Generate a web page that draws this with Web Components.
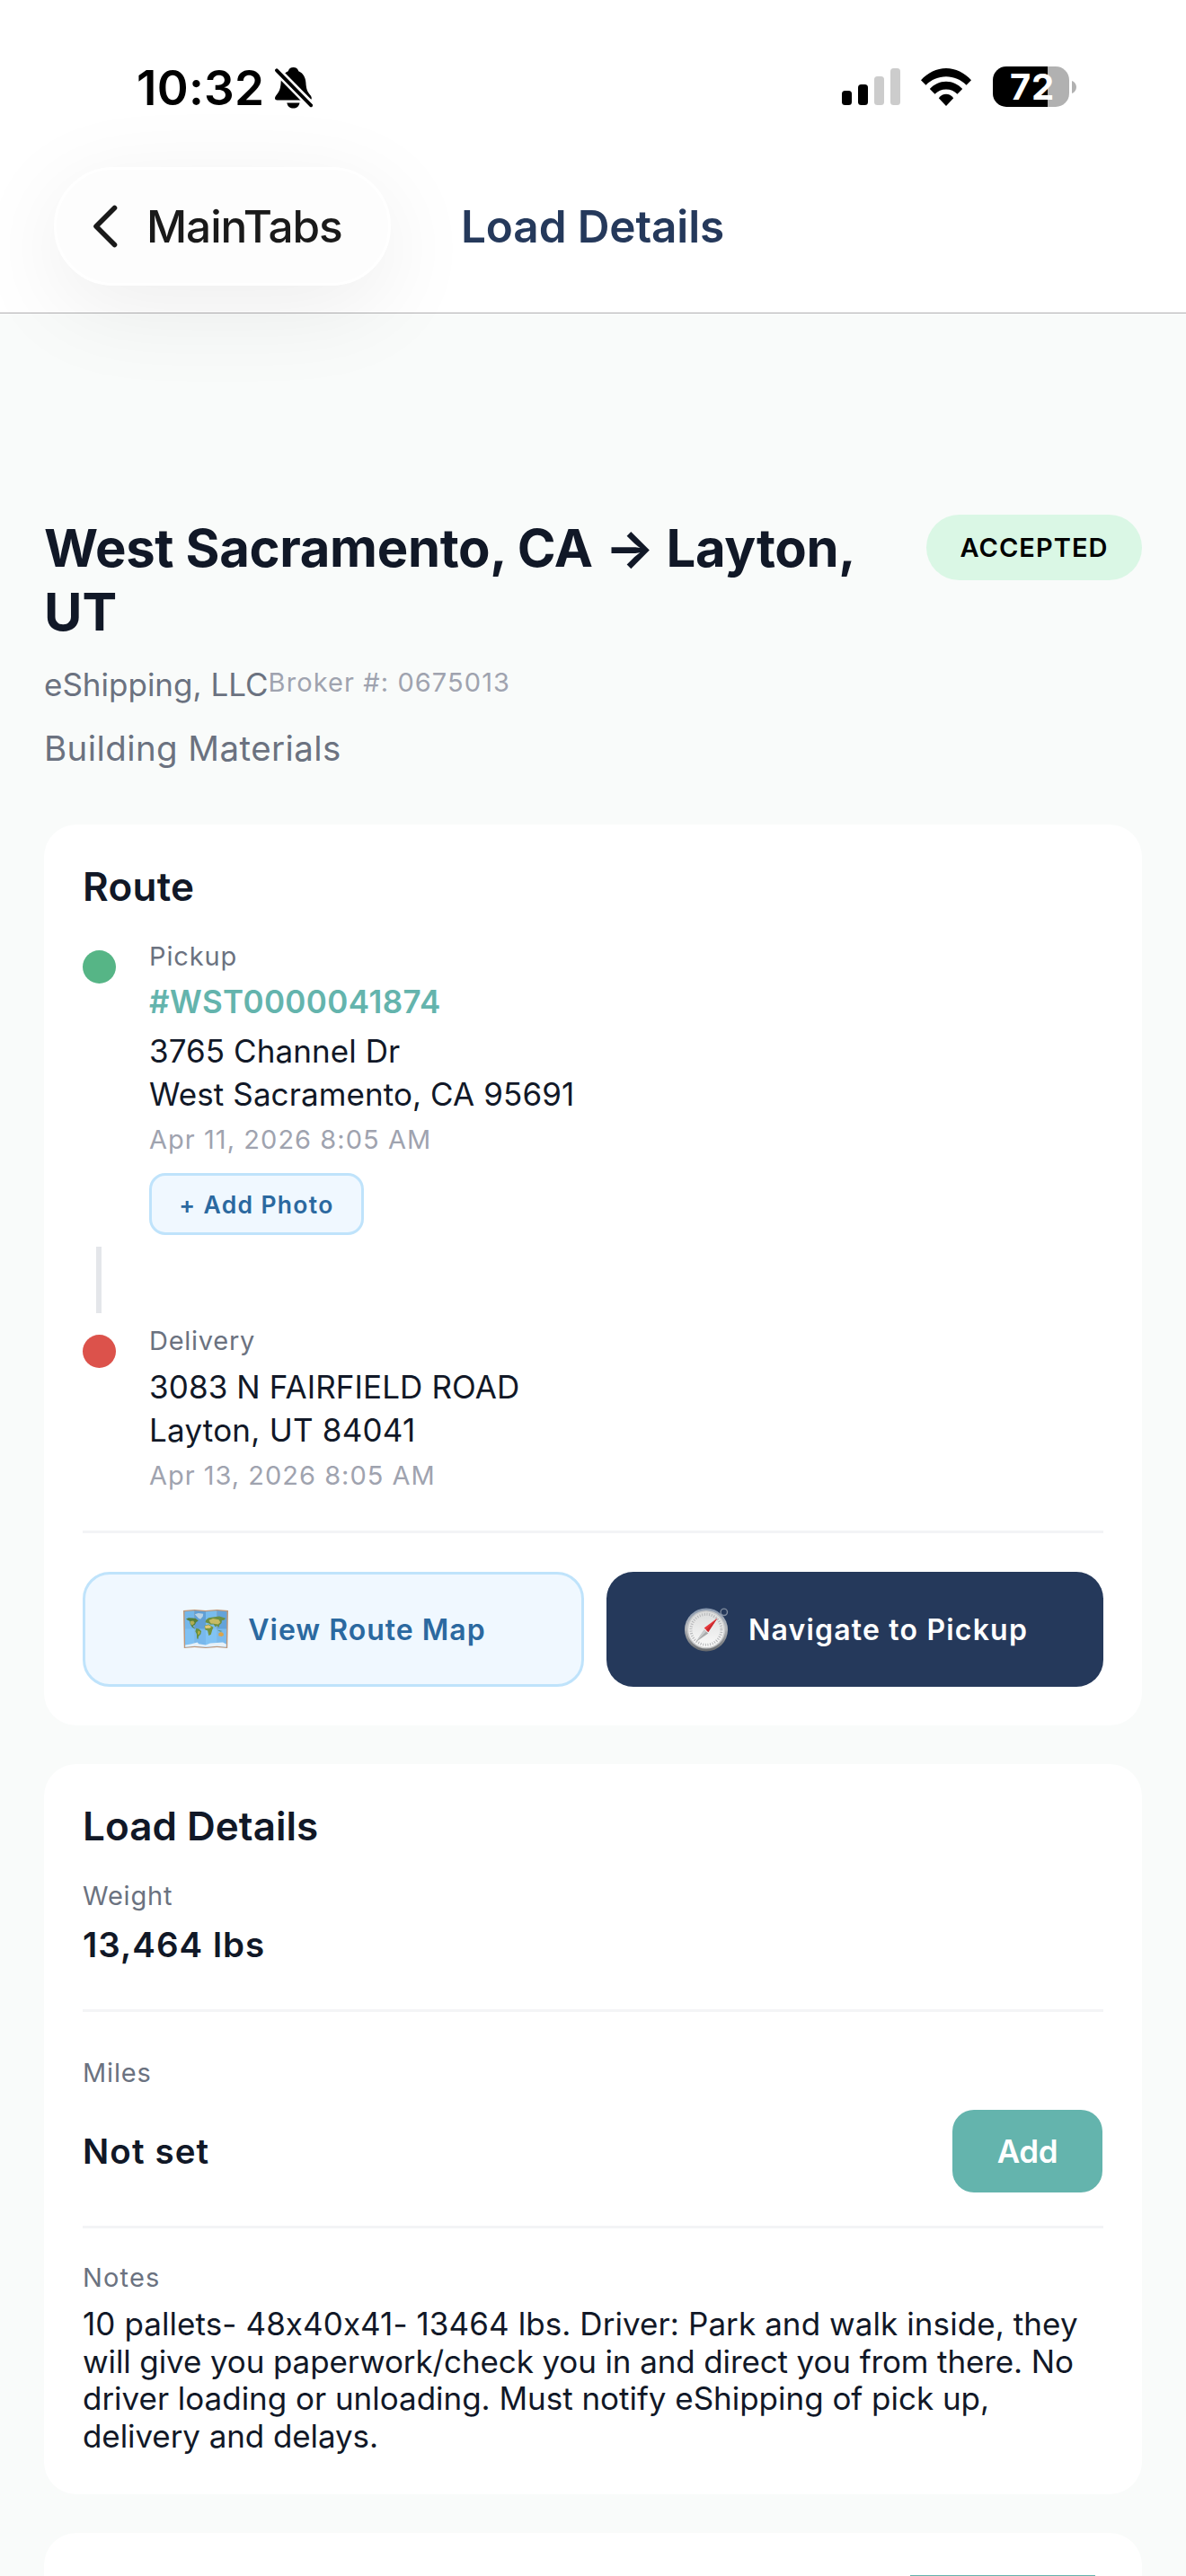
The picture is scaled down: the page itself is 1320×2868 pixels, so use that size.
<!DOCTYPE html>
<html lang="en">
<head>
<meta charset="utf-8">
<title>Load Details</title>
<style>
  html {
    background: #f9fbfa;
  }
  body {
    margin: 0;
    width: 1320px;
    height: 2868px;
    overflow: hidden;
    font-family: Inter, "Liberation Sans", sans-serif;
    color: #111827;
  }
</style>
</head>
<body>
<load-screen></load-screen>

<script>
const define = (name, html, Base = HTMLElement) => {
  const template = document.createElement('template')
  template.innerHTML = html
  customElements.define(name, class extends Base {
    constructor () {
      super()
      this.attachShadow({mode: 'open'})
      this.shadowRoot.appendChild(template.content.cloneNode(true))
    }
  })
}

// Text that is tracked out (or in) until its ink is `width` pixels wide
class TrackedText extends HTMLElement {
  connectedCallback () {
    const width = Number(this.getAttribute('width'))
    const text = this.textContent.trim()
    const style = getComputedStyle(this)
    const ctx = document.createElement('canvas').getContext('2d')
    ctx.font = `${style.fontWeight} ${style.fontSize} ${style.fontFamily}`
    const box = ctx.measureText(text)
    const ink = box.actualBoundingBoxRight + box.actualBoundingBoxLeft
    const spacing = (width - ink) / (text.length - 1)
    this.style.letterSpacing = `${spacing.toFixed(3)}px`
  }
}

define('tracked-text', /* HTML */`
<style>
    :host {
        display: inline;
        white-space: nowrap;
    }
</style>
<slot></slot>
`, TrackedText)

define('status-bar', /* HTML */`
<style>
    :host {
        display: flex;
        justify-content: space-between;
        box-sizing: border-box;
        height: 186px;
        padding: 74px 122px 0 152px;
        color: #000;
    }
    .side {
        display: flex;
        align-items: center;
        height: 45px;
    }
    .time {
        font-size: 53px;
        font-weight: 600;
        line-height: 45px;
        margin-top: 3px;
        width: 154px;
    }
    .bell { margin-top: 3px; }
    .wifi { margin: 0 23px 0 22px; }
    .battery {
        box-sizing: border-box;
        width: 85px;
        height: 45px;
        padding-left: 3px;
        border-radius: 15px;
        background: linear-gradient(90deg, #000 61px, #b1b1b1 61px);
        color: #fff;
        font-size: 40px;
        font-weight: 700;
        line-height: 45px;
        text-align: center;
    }
    .nub { margin-left: 3px; }
    svg { display: block; }
</style>
<div class="side">
    <div class="time"><tracked-text width="137">10:32</tracked-text></div>
    <svg class="bell" width="42" height="46" viewBox="0 0 42 46">
        <path d="M20.5 0c3 0 5 1.6 5.8 4.2C31.5 6.3 34 11 34.4 17c.4 7 1.6 10 5 14 2 2.3 2 5.5-1 5.5H2.5c-3 0-3.2-3-1.2-5.3C4.8 27 6.2 24 6.6 17 7 11 9.5 6.3 14.7 4.2 15.5 1.6 17.5 0 20.5 0Z"/>
        <path d="M13.3 39.4h14.2c-.6 3.8-3.5 6.2-7.1 6.2s-6.5-2.4-7.1-6.2Z"/>
        <path d="M-1 .2 43 45" stroke="#fff" stroke-width="9"/>
        <path d="M2 3.3 40.2 42.3" stroke="#000" stroke-width="3.8" stroke-linecap="round"/>
    </svg>
</div>
<div class="side">
    <svg width="65" height="41" viewBox="0 0 65 41">
        <rect y="25" width="11" height="16" rx="3.5"/>
        <rect x="18" y="18" width="11" height="23" rx="3.5"/>
        <rect x="36" y="9" width="11" height="32" rx="3.5" fill="#ccc"/>
        <rect x="54" width="11" height="41" rx="3.5" fill="#ccc"/>
    </svg>
    <svg class="wifi" width="58" height="42" viewBox="0 0 57 42">
        <path d="M.5 13.3C8 5 18 0 28.5 0S49 5 56.5 13.3L51 18.8C45 12.8 37 9.3 28.5 9.3S12 12.8 6 18.8Z"/>
        <path d="M10.3 23C15 18 21.5 14.8 28.5 14.8S42 18 46.7 23L41 28.7C37.5 25.4 33.3 23.5 28.5 23.5S19.5 25.4 16 28.7Z"/>
        <path d="M20.3 33.2C22.6 30.3 25.4 28.8 28.5 28.8S34.4 30.3 36.7 33.2L28.5 42Z"/>
    </svg>
    <div class="battery"><tracked-text width="46">72</tracked-text></div>
    <svg class="nub" width="5" height="14" viewBox="0 0 5 14">
        <path d="M0 0c3 1 5 3.8 5 7s-2 6-5 7Z" fill="#b1b1b1"/>
    </svg>
</div>
`)

define('nav-header', /* HTML */`
<style>
    :host {
        display: block;
        position: relative;
        z-index: 1;
        height: 348px;
        background: #fff;
        border-bottom: 1px solid #b1b0b2;
    }
    .row {
        display: flex;
        align-items: center;
        gap: 78px;
        padding-left: 60px;
    }
    .back {
        display: flex;
        align-items: center;
        box-sizing: border-box;
        width: 375px;
        height: 132px;
        padding-left: 40px;
        gap: 32px;
        border: 3px solid #fff;
        border-radius: 66px;
        background: #fdfdfd;
        box-shadow: 0 24px 105px rgba(0, 0, 0, 0.075);
        color: #1a1a1a;
        font-size: 49.5px;
        font-weight: 500;
    }
    .title {
        color: #25395b;
        font-size: 49.5px;
        font-weight: 600;
    }
</style>
<status-bar></status-bar>
<div class="row">
    <div class="back">
        <svg width="28" height="48" viewBox="0 0 28 48" fill="none" stroke="#1a1a1a" stroke-width="5.6" stroke-linecap="round" stroke-linejoin="round">
            <path d="M24.5 3.5 4 24l20.5 20.5"/>
        </svg>
        <tracked-text width="214">MainTabs</tracked-text>
    </div>
    <div class="title"><tracked-text width="289">Load Details</tracked-text></div>
</div>
`)

define('status-badge', /* HTML */`
<style>
    :host {
        flex: none;
        width: 240px;
        height: 73px;
        border-radius: 37px;
        background: #daf7e5;
        color: #000;
        font-size: 29px;
        font-weight: 600;
        line-height: 73px;
        text-align: center;
    }
</style>
<slot></slot>
`)

define('load-summary', /* HTML */`
<style>
    :host {
        display: block;
        height: 345px;
        padding-top: 224px;
    }
    .top {
        display: flex;
        justify-content: space-between;
    }
    h1 {
        flex: 1;
        margin: 1.5px 0 0;
        font-size: 58px;
        font-weight: 700;
        line-height: 71px;
    }
    .company {
        display: flex;
        align-items: flex-start;
        margin-top: 24.5px;
        color: #6b7280;
        font-size: 35px;
        line-height: 43px;
    }
    .broker {
        color: #9fa3af;
        font-size: 29px;
        line-height: 37px;
    }
    .commodity {
        margin-top: 25px;
        color: #6b7280;
        font-size: 38.5px;
        line-height: 48px;
    }
</style>
<div class="top">
    <h1><tracked-text width="900">West Sacramento, CA → Layton,</tracked-text> UT</h1>
    <status-badge><tracked-text width="163">ACCEPTED</tracked-text></status-badge>
</div>
<div class="company">
    <tracked-text width="247">eShipping, LLC</tracked-text>
    <div class="broker"><tracked-text width="265.5">Broker #: 0675013</tracked-text></div>
</div>
<div class="commodity"><tracked-text width="326">Building Materials</tracked-text></div>
`)

define('info-card', /* HTML */`
<style>
    :host {
        display: block;
        margin-bottom: 43px;
        padding: 43px;
        border-radius: 36px;
        background: #fff;
    }
    ::slotted([slot="title"]) {
        display: block;
        font-size: 44px;
        font-weight: 600;
        line-height: 52px;
    }
</style>
<slot name="title"></slot>
<slot></slot>
`)

define('route-stop', /* HTML */`
<style>
    :host {
        display: flex;
        gap: 37px;
        color: #111827;
        font-size: 35px;
        line-height: 48px;
    }
    .dot {
        flex: none;
        width: 37px;
        height: 37px;
        margin-top: 12px;
        border-radius: 50%;
        background: var(--dot);
    }
    .body {
        display: flex;
        flex-direction: column;
        align-items: flex-start;
    }
    ::slotted([slot="label"]) {
        color: #6b7280;
        font-size: 29px;
        line-height: 37px;
    }
    ::slotted([slot="reference"]) {
        margin-top: 11px;
        color: #64b4ad;
        font-weight: 600;
        line-height: 43px;
    }
    .address {
        display: flex;
        flex-direction: column;
        margin-top: 8.5px;
    }
    ::slotted([slot="date"]) {
        margin-top: 8.5px;
        color: #9fa3af;
        font-size: 29px;
        line-height: 37px;
    }
</style>
<div class="dot"></div>
<div class="body">
    <slot name="label"></slot>
    <slot name="reference"></slot>
    <div class="address"><slot></slot></div>
    <slot name="date"></slot>
    <slot name="action"></slot>
</div>
`)

define('soft-button', /* HTML */`
<style>
    :host {
        display: flex;
        align-items: center;
        justify-content: center;
        box-sizing: border-box;
        border: 3px solid #bfe3fb;
        border-radius: 30px;
        background: #f0f8ff;
        color: #2b69a0;
        font-weight: 600;
    }
    :host([kind="navy"]) {
        border: 0;
        background: #25395b;
        color: #fff;
    }
    :host([kind="teal"]) {
        border: 0;
        border-radius: 24px;
        background: #64b4ad;
        color: #fff;
    }
    :host([small]) {
        border-radius: 18px;
    }
</style>
<slot></slot>
`)

define('map-icon', /* HTML */`
<style>
    :host { display: block; }
    svg { display: block; }
</style>
<svg width="50" height="44" viewBox="0 0 50 44">
    <path d="M0 1 12.5 0 25 1 37.5 0 50 1l-.8 42L37.5 42 25 43l-12.5-1L.8 43Z" fill="#bd9678"/>
    <path d="M1.5 2.3 12.5 1.3v39.5L2.2 41.7Z" fill="#73b7ea"/>
    <path d="M12.5 1.3 25 2.3v39.4l-12.5-.9Z" fill="#609fd6"/>
    <path d="M25 2.3 37.5 1.3v39.5L25 41.7Z" fill="#78bcee"/>
    <path d="m37.5 1.3 11 1-.7 39.4-10.3-.9Z" fill="#63a3da"/>
    <path d="M2 21.5h46.2l-.4 19.8-10.3-.8-12.5 1-12.5-1-10.3.8Z" fill="#85c6f8" opacity=".65"/>
    <path d="M2.2 41.7v-2.2l6-1 7.5-2 1.5 1.7 7.8 1.2 5-2 14-.8 3.8 1.8v3.3l-10.3-.9-12.5.9-12.5-.9Z" fill="#e6f1f9"/>
    <path d="m12.800 5.200 4-1.200 5.400.8-.5 3-2.600 2.900-2.400-1.200Z" fill="#b9d2e4"/>
    <path d="m3 10.5 2.800-1.300 5 .2 3 .6 3 2.500-2.400 1.500-1.600 3-2.200 1.200 2.600 3.300-3.300-1.800-2-3.300-.8-3.700-1.800-.7Z" fill="#557f3a"/>
    <path d="m7.600 13 3.600-.4 1.500 2.500-2.500 2.500-2-1Z" fill="#b2ad53"/>
    <path d="m14.300 21 3 .4 2.800 2.600-.8 3.600-2.200 2.200-.7 3.200-1.200-.8-.3-5-1.500-3Z" fill="#668f3c"/>
    <path d="m16.500 23.600 2.300 1.200-1.400 3.500-1.200-1Z" fill="#bdb24e"/>
    <path d="m24.500 14.300.8-2.700 2.800-2.300 5-.8 7-1 7 2.200-1.800 2-2.400.3-.3 3-2.400 2.200-.8 2.800-2-2.300-1.500 1.800-2.200-3-3.300.3-1.800-1.300Z" fill="#6c8f43"/>
    <path d="m28.500 12 4.500-2 6.500 1.200 1.800 3-2.600 2.300-5-.8-3-.3Z" fill="#c7bb63"/>
    <path d="m23.600 18 4.600-1.600 3.800 2.300 1.500 1.400-1.300 2.600-1.400 5-2.500 1.200-1.200-5.300-2.700-1.200Z" fill="#73923e"/>
    <path d="m24 18.300 4-1 3.300 1.800-1.700 1.700-5 .2Z" fill="#e0c778"/>
    <path d="m39.300 26.400 2.500-1.500 2.500 1.200.7 2.600-2.300 1.300-3.400-.8Z" fill="#dba348"/>
    <path d="m37.400 22.400 3.200 1 3 .6-2.600.5Z" fill="#55803b"/>
</svg>
`)

define('compass-icon', /* HTML */`
<style>
    :host { display: block; }
    svg { display: block; }
</style>
<svg width="49" height="49" viewBox="0 0 49 49">
    <defs>
        <linearGradient id="rim" x1="0" y1="0" x2="0" y2="1">
            <stop offset="0" stop-color="#8797ae"/>
            <stop offset=".45" stop-color="#b7b9bc"/>
            <stop offset="1" stop-color="#66696d"/>
        </linearGradient>
        <linearGradient id="face" x1="0" y1="0" x2="0" y2="1">
            <stop offset="0" stop-color="#dcdddd"/>
            <stop offset="1" stop-color="#fafafa"/>
        </linearGradient>
    </defs>
    <circle cx="43.800" cy="4.800" r="3.700" fill="none" stroke="#7f8b9e" stroke-width="1.400"/>
    <circle cx="24" cy="24.500" r="24" fill="url(#rim)"/>
    <circle cx="24" cy="24.300" r="21.300" fill="#c8c9ca"/>
    <circle cx="24" cy="24.300" r="19.800" fill="url(#face)"/>
    <circle cx="24" cy="24.300" r="17" fill="none" stroke="#b4b5b7" stroke-width="3" stroke-dasharray="1 1.670"/>
    <path d="m12.500 38 9.200-13.500 4.600 4Z" fill="#a7a9aa"/>
    <path d="m12.500 38 9.200-13.500 2.300 2Z" fill="#c9cbcc"/>
    <path d="m36.500 11.500-14.800 11 4.600 4.500Z" fill="#e5383b"/>
    <path d="m36.500 11.500-12.500 13.300 2.300 2.200Z" fill="#c7272d"/>
</svg>
`)

define('route-card', /* HTML */`
<style>
    :host { display: block; }
    route-stop { margin-top: 33px; }
    .pickup { --dot: #56b586; }
    .delivery { --dot: #dc524b; margin-top: 12px; }
    .line {
        width: 6px;
        height: 74px;
        margin: 13px 0 0 15px;
        background: #e4e6ea;
    }
    .photo {
        width: 239px;
        height: 69px;
        margin-top: 19px;
        font-size: 26.5px;
    }
    .actions {
        display: grid;
        grid-template-columns: 558px 553px;
        gap: 25px;
        margin-top: 43px;
        padding-top: 43px;
        border-top: 3px solid #f3f4f6;
        font-size: 32px;
    }
    .actions soft-button {
        height: 128px;
        gap: 22px;
        padding-left: 3px;
    }
</style>
<info-card>
    <tracked-text slot="title" width="120">Route</tracked-text>
    <route-stop class="pickup">
        <tracked-text slot="label" width="94.5">Pickup</tracked-text>
        <tracked-text slot="reference" width="323">#WST0000041874</tracked-text>
        <tracked-text width="277">3765 Channel Dr</tracked-text>
        <tracked-text width="471">West Sacramento, CA 95691</tracked-text>
        <tracked-text slot="date" width="311">Apr 11, 2026 8:05 AM</tracked-text>
        <soft-button slot="action" class="photo" small>
            <tracked-text width="168">+ Add Photo</tracked-text>
        </soft-button>
    </route-stop>
    <div class="line"></div>
    <route-stop class="delivery">
        <tracked-text slot="label" width="115">Delivery</tracked-text>
        <tracked-text width="409">3083 N FAIRFIELD ROAD</tracked-text>
        <tracked-text width="291">Layton, UT 84041</tracked-text>
        <tracked-text slot="date" width="315.5">Apr 13, 2026 8:05 AM</tracked-text>
    </route-stop>
    <div class="actions">
        <soft-button>
            <map-icon></map-icon>
            <tracked-text width="262.5">View Route Map</tracked-text>
        </soft-button>
        <soft-button kind="navy">
            <compass-icon></compass-icon>
            <tracked-text width="307">Navigate to Pickup</tracked-text>
        </soft-button>
    </div>
</info-card>
`)

define('detail-row', /* HTML */`
<style>
    :host { display: block; }
    ::slotted([slot="label"]) {
        display: block;
        color: #6b7280;
        font-size: 29px;
        line-height: 37px;
    }
    .value {
        display: flex;
        align-items: center;
        justify-content: space-between;
        margin-top: var(--gap, 12px);
        font-size: 38.5px;
        font-weight: 600;
        line-height: 48px;
    }
</style>
<slot name="label"></slot>
<div class="value"><slot></slot></div>
`)

define('details-card', /* HTML */`
<style>
    :host { display: block; }
    .weight { margin-top: 33px; }
    .miles {
        --gap: 23px;
        margin-top: 48px;
        padding: 49px 0 37px;
        border: solid #f3f4f6;
        border-width: 3px 0;
    }
    .add {
        width: 167px;
        height: 92px;
        margin-right: 1px;
        font-size: 35px;
    }
    .label {
        margin-top: 36px;
        color: #6b7280;
        font-size: 29px;
        line-height: 37px;
    }
    .notes {
        display: flex;
        flex-direction: column;
        margin-top: 13px;
        font-size: 35px;
        line-height: 41.7px;
    }
</style>
<info-card>
    <tracked-text slot="title" width="258">Load Details</tracked-text>
    <detail-row class="weight">
        <tracked-text slot="label" width="99">Weight</tracked-text>
        <tracked-text width="200">13,464 lbs</tracked-text>
    </detail-row>
    <detail-row class="miles">
        <tracked-text slot="label" width="72.5">Miles</tracked-text>
        <tracked-text width="137.5">Not set</tracked-text>
        <soft-button class="add" kind="teal"><tracked-text width="66">Add</tracked-text></soft-button>
    </detail-row>
    <div class="label"><tracked-text width="82">Notes</tracked-text></div>
    <div class="notes">
        <tracked-text width="1114">10 pallets- 48x40x41- 13464 lbs. Driver: Park and walk inside, they</tracked-text>
        <tracked-text width="1101">will give you paperwork/check you in and direct you from there. No</tracked-text>
        <tracked-text width="1006">driver loading or unloading. Must notify eShipping of pick up,</tracked-text>
        <tracked-text width="326">delivery and delays.</tracked-text>
    </div>
</info-card>
`)

define('load-screen', /* HTML */`
<style>
    :host {
        display: block;
        height: 2868px;
        overflow: hidden;
    }
    main { padding: 0 49px; }
    /* only the top of this card is above the fold */
    .next {
        box-sizing: border-box;
        height: 48px;
        margin-bottom: 0;
        padding: 47px 43px 0;
        border-radius: 36px 36px 0 0;
    }
    .next soft-button {
        width: 206px;
        height: 1px;
        margin-right: 9px;
        margin-left: auto;
        border-radius: 0;
    }
</style>
<nav-header></nav-header>
<main>
    <load-summary></load-summary>
    <route-card></route-card>
    <details-card></details-card>
    <info-card class="next">
        <soft-button kind="teal"></soft-button>
    </info-card>
</main>
`)
</script>
</body>
</html>
